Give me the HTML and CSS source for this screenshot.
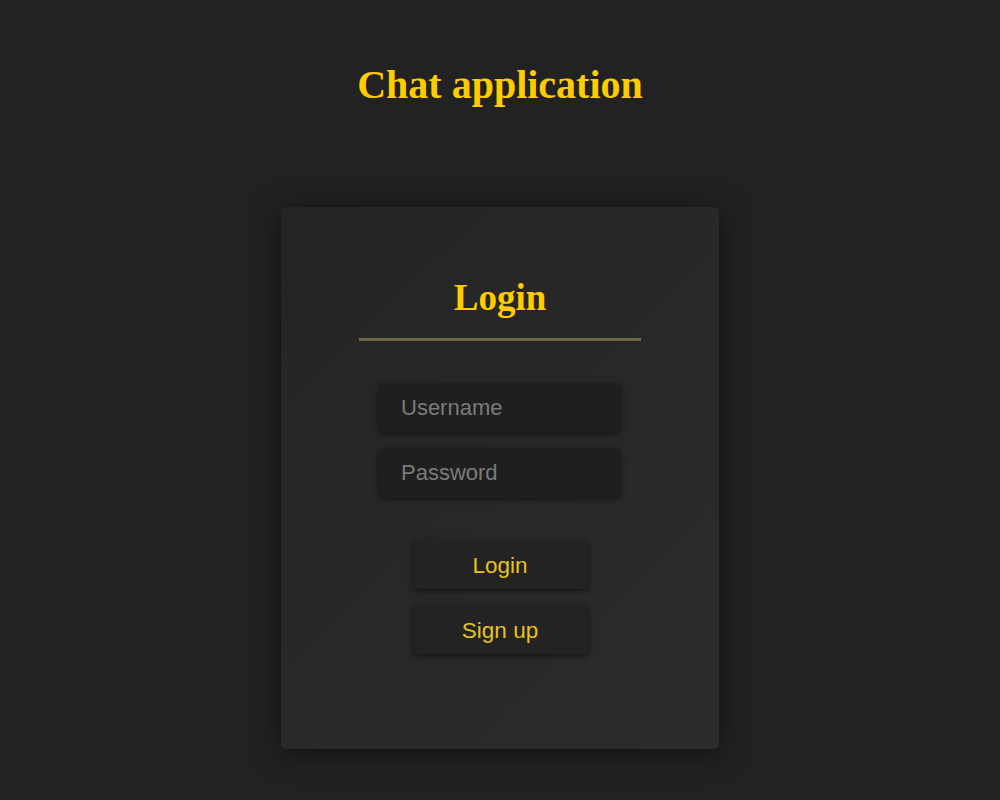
FILE: index.html
```html
<!DOCTYPE html>
<html lang="en">
<head>
<meta charset="utf-8">
<title>Chat application</title>
<link rel="stylesheet" href="styles.css">
</head>
<body>
  <h1 class="app-title">Chat application</h1>
  <main class="card">
    <h2 class="card-title">Login</h2>
    <form class="form">
      <div class="fields">
        <input class="field" type="text" placeholder="Username">
        <input class="field" type="password" placeholder="Password">
      </div>
      <div class="actions">
        <button class="btn" type="button">Login</button>
        <button class="btn" type="button">Sign up</button>
      </div>
    </form>
  </main>
</body>
</html>
```
FILE: styles.css
```css
* { box-sizing: border-box; }
html, body { margin: 0; padding: 0; }
body {
  background: #222222;
  min-height: 800px;
  display: flex;
  flex-direction: column;
  align-items: center;
  font-family: "Liberation Sans", Arial, sans-serif;
}
.app-title {
  margin: 62px 0 0;
  font-family: "Liberation Serif", "Times New Roman", serif;
  font-weight: bold;
  font-size: 40px;
  line-height: 46px;
  color: #ffcc00;
  text-align: center;
}
.card {
  margin-top: 99px;
  width: 438px;
  height: 542px;
  border-radius: 5px;
  background: linear-gradient(135deg, #242424 0%, #2c2c2c 100%);
  box-shadow: 0 4px 30px rgba(0, 0, 0, 0.55);
  display: flex;
  flex-direction: column;
  align-items: center;
  padding-top: 70px;
}
.card-title {
  margin: 0;
  width: 282px;
  font-family: "Liberation Serif", "Times New Roman", serif;
  font-weight: bold;
  font-size: 37px;
  line-height: 42px;
  color: #ffcc00;
  text-align: center;
  padding-bottom: 19px;
  border-bottom: 3px solid #6d6647;
}
.form {
  margin-top: 42px;
  display: flex;
  flex-direction: column;
  align-items: center;
}
.fields {
  display: flex;
  flex-direction: column;
  gap: 16px;
}
.field {
  width: 242px;
  height: 49px;
  border: none;
  border-radius: 6px;
  background: #1f1f1f;
  box-shadow: 0 2px 6px rgba(0, 0, 0, 0.55);
  padding: 0 22px;
  font-family: "Liberation Sans", Arial, sans-serif;
  font-size: 22px;
  color: #cccccc;
  outline: none;
}
.field::placeholder { color: #7b7b7b; }
.actions {
  margin-top: 42px;
  display: flex;
  flex-direction: column;
  gap: 15px;
}
.btn {
  width: 175px;
  height: 50px;
  border: none;
  border-radius: 6px;
  background: #232323;
  box-shadow: 0 2px 6px rgba(0, 0, 0, 0.55);
  padding: 4px 0 0;
  font-family: "Liberation Sans", Arial, sans-serif;
  font-size: 22.5px;
  color: #e8c21c;
  cursor: pointer;
}
```
